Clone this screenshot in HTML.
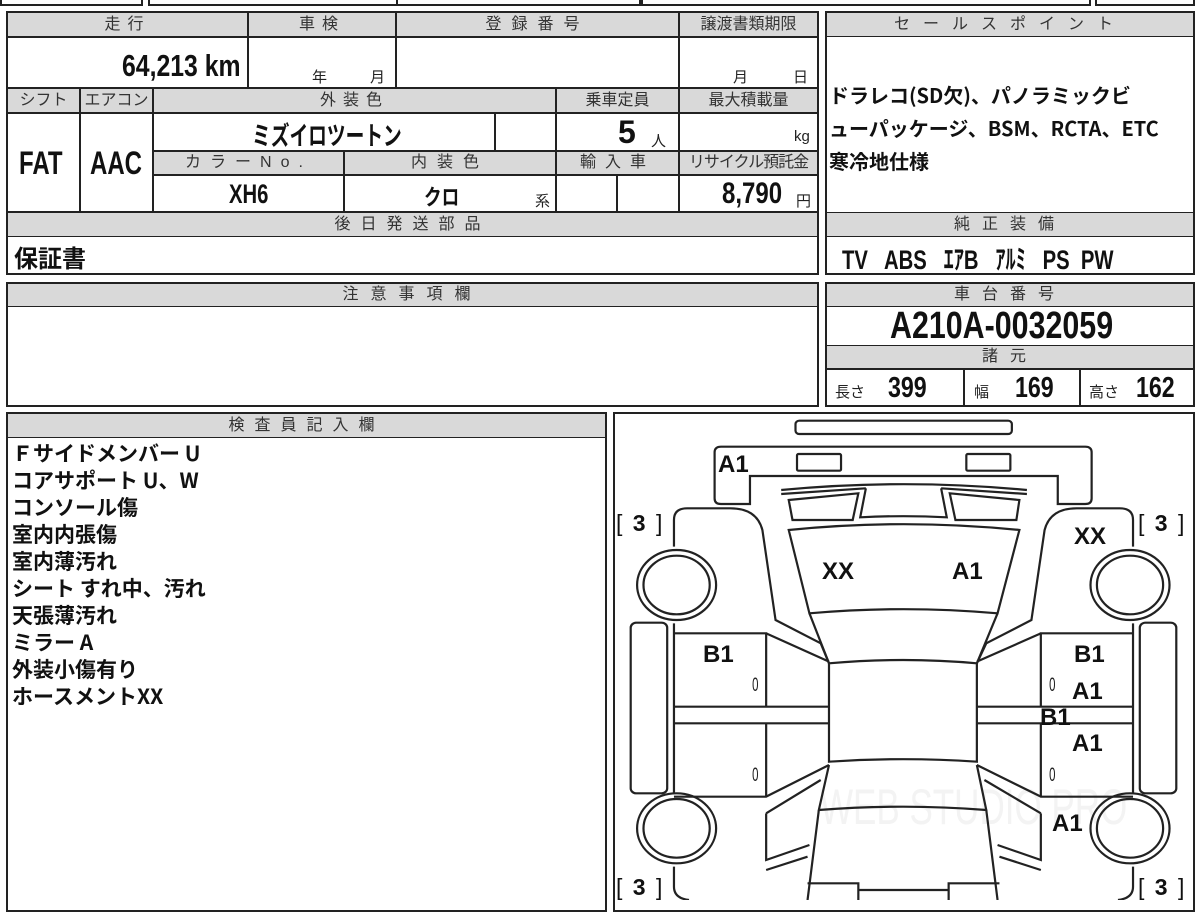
<!DOCTYPE html>
<html><head><meta charset="utf-8"><style>
*{box-sizing:border-box;margin:0;padding:0}
body{width:1200px;height:900px;background:#fff;position:relative;overflow:hidden;font-family:"Liberation Sans","Noto Sans CJK JP",sans-serif;color:#111}
.b{position:absolute;border:2px solid #222;background:#fff}
.h{position:absolute;background:#d9d9d9;border:1px solid #222;font-size:16px;color:#333;text-align:center;letter-spacing:7px;line-height:23px;white-space:nowrap;overflow:hidden}
.c{position:absolute;border:1px solid #222;background:#fff}
.t{position:absolute;font-weight:bold;white-space:nowrap;font-family:"Liberation Sans Narrow","Liberation Sans","Noto Sans CJK JP",sans-serif}
.s{position:absolute;font-size:15px;color:#222;white-space:nowrap}
.m{position:absolute;font-weight:bold;font-size:24px;white-space:nowrap;font-family:"Liberation Sans Narrow","Liberation Sans",sans-serif}
</style></head><body>
<div class="b" style="left:0;top:-10px;width:143px;height:16px"></div>
<div class="b" style="left:148px;top:-10px;width:250px;height:16px"></div>
<div class="b" style="left:396px;top:-10px;width:245px;height:16px"></div>
<div class="b" style="left:641px;top:-10px;width:450px;height:16px"></div>
<div class="b" style="left:1095px;top:-10px;width:100px;height:16px"></div>

<div class="b" style="left:6px;top:11px;width:813px;height:264px"></div>
<div class="h" style="left:7px;top:12px;width:241px;height:25px">走行</div>
<div class="h" style="left:248px;top:12px;width:148px;height:25px">車検</div>
<div class="h" style="left:396px;top:12px;width:283px;height:25px;letter-spacing:10px">登録番号</div>
<div class="h" style="left:679px;top:12px;width:139px;height:25px;letter-spacing:0">譲渡書類期限</div>
<div class="c" style="left:7px;top:37px;width:241px;height:51px"></div>
<div class="c" style="left:248px;top:37px;width:148px;height:51px"></div>
<div class="c" style="left:396px;top:37px;width:283px;height:51px"></div>
<div class="c" style="left:679px;top:37px;width:139px;height:51px"></div>
<div class="t" style="left:122px;top:48px;font-size:31px;transform:scaleX(.8);transform-origin:left">64,213 km</div>
<div class="s" style="left:312px;top:66px">年</div><div class="s" style="left:370px;top:66px">月</div>
<div class="s" style="left:733px;top:66px">月</div><div class="s" style="left:793px;top:66px">日</div>

<div class="h" style="left:7px;top:88px;width:73px;height:25px;letter-spacing:0">シフト</div>
<div class="h" style="left:80px;top:88px;width:73px;height:25px;letter-spacing:0">エアコン</div>
<div class="h" style="left:153px;top:88px;width:403px;height:25px">外装色</div>
<div class="h" style="left:556px;top:88px;width:123px;height:25px;letter-spacing:0">乗車定員</div>
<div class="h" style="left:679px;top:88px;width:139px;height:25px;letter-spacing:0">最大積載量</div>
<div class="c" style="left:7px;top:113px;width:73px;height:99px"></div>
<div class="c" style="left:80px;top:113px;width:73px;height:99px"></div>
<div class="t" style="left:19px;top:145px;font-size:32px;transform:scaleX(.75);transform-origin:left">FAT</div>
<div class="t" style="left:90px;top:145px;font-size:32px;transform:scaleX(.75);transform-origin:left">AAC</div>
<div class="c" style="left:153px;top:113px;width:342px;height:38px"></div>
<div class="c" style="left:495px;top:113px;width:61px;height:38px"></div>
<div class="c" style="left:556px;top:113px;width:123px;height:38px"></div>
<div class="c" style="left:679px;top:113px;width:139px;height:38px"></div>
<div class="t" style="left:252px;top:116px;font-size:26px;font-family:'Noto Sans CJK JP',sans-serif;transform:scaleX(.72);transform-origin:left">ミズイロツートン</div>
<div class="t" style="left:618px;top:114px;font-size:32px">5</div><div class="s" style="left:651px;top:130px">人</div>
<div class="s" style="left:794px;top:128px">kg</div>
<div class="h" style="left:153px;top:151px;width:191px;height:24px;line-height:22px;letter-spacing:9px">カラーNo.</div>
<div class="h" style="left:344px;top:151px;width:212px;height:24px;line-height:22px;letter-spacing:10px">内装色</div>
<div class="h" style="left:556px;top:151px;width:123px;height:24px;line-height:22px;letter-spacing:9px">輸入車</div>
<div class="h" style="left:679px;top:151px;width:139px;height:24px;line-height:22px;letter-spacing:-1px">リサイクル預託金</div>
<div class="c" style="left:153px;top:175px;width:191px;height:37px"></div>
<div class="c" style="left:344px;top:175px;width:212px;height:37px"></div>
<div class="c" style="left:556px;top:175px;width:61px;height:37px"></div>
<div class="c" style="left:617px;top:175px;width:62px;height:37px"></div>
<div class="c" style="left:679px;top:175px;width:139px;height:37px"></div>
<div class="t" style="left:229px;top:179px;font-size:27px;transform:scaleX(.75);transform-origin:left">XH6</div>
<div class="t" style="left:424px;top:180px;font-size:22px;font-family:'Noto Sans CJK JP',sans-serif;transform:scaleX(.8);transform-origin:left">クロ</div>
<div class="s" style="left:535px;top:190px">系</div>
<div class="t" style="left:722px;top:177px;font-size:30px;transform:scaleX(.8);transform-origin:left">8,790</div><div class="s" style="left:796px;top:190px">円</div>
<div class="h" style="left:7px;top:212px;width:811px;height:25px;letter-spacing:10px">後日発送部品</div>
<div class="t" style="left:14px;top:239px;font-size:24px;font-family:'Noto Sans CJK JP',sans-serif">保証書</div>

<div class="b" style="left:825px;top:11px;width:370px;height:264px"></div>
<div class="h" style="left:826px;top:12px;width:368px;height:25px;letter-spacing:13px">セールスポイント</div>
<div class="t" style="left:829px;top:78px;font-size:20px;line-height:33px;font-family:'Noto Sans CJK JP',sans-serif">ドラレコ(SD欠)、パノラミックビ<br>ューパッケージ、BSM、RCTA、ETC<br>寒冷地仕様</div>
<div class="h" style="left:826px;top:212px;width:368px;height:25px;letter-spacing:12px">純正装備</div>
<div class="t" style="left:842px;top:238px;font-size:27px;transform:scaleX(.75);transform-origin:left">TV&nbsp;&nbsp; ABS&nbsp;&nbsp; ｴｱB&nbsp;&nbsp; ｱﾙﾐ&nbsp;&nbsp; PS&nbsp; PW</div>

<div class="b" style="left:6px;top:282px;width:813px;height:125px"></div>
<div class="h" style="left:7px;top:283px;width:811px;height:24px;line-height:22px;letter-spacing:12px">注意事項欄</div>

<div class="b" style="left:825px;top:282px;width:370px;height:125px"></div>
<div class="h" style="left:826px;top:283px;width:368px;height:24px;line-height:22px;letter-spacing:12px">車台番号</div>
<div class="t" style="left:890px;top:305px;font-size:38px;transform:scaleX(.8);transform-origin:left">A210A-0032059</div>
<div class="h" style="left:826px;top:345px;width:368px;height:24px;line-height:22px;letter-spacing:12px">諸元</div>
<div class="c" style="left:826px;top:369px;width:138px;height:37px"></div>
<div class="c" style="left:964px;top:369px;width:116px;height:37px"></div>
<div class="c" style="left:1080px;top:369px;width:114px;height:37px"></div>
<div class="s" style="left:835px;top:381px">長さ</div><div class="t" style="left:888px;top:372px;font-size:29px;transform:scaleX(.8);transform-origin:left">399</div>
<div class="s" style="left:974px;top:381px">幅</div><div class="t" style="left:1015px;top:372px;font-size:29px;transform:scaleX(.8);transform-origin:left">169</div>
<div class="s" style="left:1089px;top:381px">高さ</div><div class="t" style="left:1136px;top:372px;font-size:29px;transform:scaleX(.8);transform-origin:left">162</div>

<div class="b" style="left:6px;top:412px;width:601px;height:500px"></div>
<div class="h" style="left:7px;top:413px;width:599px;height:25px;letter-spacing:10px">検査員記入欄</div>
<div class="t" style="left:12px;top:440px;font-size:21px;line-height:27px;font-family:'Noto Sans CJK JP',sans-serif">Ｆサイドメンバー U<br>コアサポート U、W<br>コンソール傷<br>室内内張傷<br>室内薄汚れ<br>シート すれ中、汚れ<br>天張薄汚れ<br>ミラー A<br>外装小傷有り<br>ホースメントXX</div>

<div class="b" style="left:613px;top:412px;width:582px;height:500px"></div>
<div style="position:absolute;left:820px;top:778px;font-size:50px;color:#f3f3f3;transform:scaleX(.7);transform-origin:left;white-space:nowrap">WEB STUDIO PRO</div>
<svg style="position:absolute;left:610px;top:410px" width="590" height="490" viewBox="0 0 1568 1470" preserveAspectRatio="none" fill="none" stroke="#222" stroke-width="2.2">
<rect x="493" y="32" width="575" height="40" rx="10" vector-effect="non-scaling-stroke"/>
<path vector-effect="non-scaling-stroke" d="M295,110 H1263 Q1280,110 1280,127 V265 Q1280,282 1263,282 H1190 V198 H372 V282 H295 Q278,282 278,265 V127 Q278,110 295,110 Z"/>
<rect vector-effect="non-scaling-stroke" x="497" y="132" width="117" height="50" rx="4"/>
<rect vector-effect="non-scaling-stroke" x="947" y="132" width="117" height="50" rx="4"/>
<path vector-effect="non-scaling-stroke" d="M455,240 Q780,205 1108,240 M455,252 L680,235 M880,235 L1108,252"/>
<path vector-effect="non-scaling-stroke" d="M475,270 L660,250 L645,330 L485,330 Z M903,250 L1088,270 L1080,330 L918,330 Z M680,235 L665,322 Q780,315 895,322 L880,235"/>
<path vector-effect="non-scaling-stroke" d="M475,360 Q780,325 1088,360 L1030,610 Q780,585 530,610 Z"/>
<path vector-effect="non-scaling-stroke" d="M530,610 L582,760 Q780,740 975,760 L1030,610 M582,760 V1055 Q780,1040 975,1055 V760"/>
<path vector-effect="non-scaling-stroke" d="M170,410 V330 Q170,295 205,295 H320 Q390,295 405,360 L440,630 L560,700 L582,760 M1390,410 V330 Q1390,295 1355,295 H1240 Q1170,295 1155,360 L1120,630 L1000,700 L975,760"/>
<path vector-effect="non-scaling-stroke" d="M170,670 H415 V890 M415,670 L582,755 M170,890 H582 M170,940 H582 M415,940 V1160 M170,1160 H415 L582,1065 M170,640 V1150"/>
<path vector-effect="non-scaling-stroke" d="M1390,670 H1145 V890 M1145,670 L975,755 M1390,890 H975 M1390,940 H975 M1145,940 V1160 M1390,1160 H1145 L975,1065 M1390,640 V1150"/>
<rect vector-effect="non-scaling-stroke" x="55" y="638" width="97" height="512" rx="15"/>
<rect vector-effect="non-scaling-stroke" x="1408" y="638" width="97" height="512" rx="15"/>
<circle vector-effect="non-scaling-stroke" cx="177" cy="525" r="105"/><circle vector-effect="non-scaling-stroke" cx="177" cy="525" r="88"/>
<circle vector-effect="non-scaling-stroke" cx="177" cy="1255" r="105"/><circle vector-effect="non-scaling-stroke" cx="177" cy="1255" r="88"/>
<circle vector-effect="non-scaling-stroke" cx="1382" cy="525" r="105"/><circle vector-effect="non-scaling-stroke" cx="1382" cy="525" r="88"/>
<circle vector-effect="non-scaling-stroke" cx="1382" cy="1255" r="105"/><circle vector-effect="non-scaling-stroke" cx="1382" cy="1255" r="88"/>
<path vector-effect="non-scaling-stroke" d="M582,1065 L555,1200 Q780,1180 1000,1200 L975,1065 M555,1200 L525,1470 M1000,1200 L1030,1470"/>
<path vector-effect="non-scaling-stroke" d="M415,1210 L560,1110 M415,1210 V1350 L530,1305 M415,1380 L525,1340 M1145,1210 L995,1110 M1145,1210 V1350 L1030,1305 M1145,1380 L1035,1340"/>
<path vector-effect="non-scaling-stroke" d="M170,1370 V1430 Q170,1465 210,1470 M1390,1370 V1430 Q1390,1465 1350,1470"/>
<path vector-effect="non-scaling-stroke" d="M525,1420 H660 V1470 M900,1470 V1420 H1035 M660,1440 H900"/>
</svg>
<div class="m" style="left:718px;top:451px">A1</div>
<div class="m" style="left:1074px;top:523px">XX</div>
<div class="m" style="left:822px;top:558px">XX</div>
<div class="m" style="left:952px;top:558px">A1</div>
<div class="m" style="left:703px;top:641px">B1</div>
<div class="m" style="left:1074px;top:641px">B1</div>
<div class="m" style="left:1072px;top:678px">A1</div>
<div class="m" style="left:1040px;top:704px">B1</div>
<div class="m" style="left:1072px;top:730px">A1</div>
<div class="m" style="left:1052px;top:810px">A1</div>
<div class="s" style="left:750px;top:675px;font-size:19px;transform:scaleX(.6)">0</div>
<div class="s" style="left:750px;top:765px;font-size:19px;transform:scaleX(.6)">0</div>
<div class="s" style="left:1047px;top:675px;font-size:19px;transform:scaleX(.6)">0</div>
<div class="s" style="left:1047px;top:765px;font-size:19px;transform:scaleX(.6)">0</div>
<div class="m" style="left:616px;top:510px;font-size:23px;font-weight:normal;word-spacing:4px">[ <b>3</b> ]</div>
<div class="m" style="left:1138px;top:510px;font-size:23px;font-weight:normal;word-spacing:4px">[ <b>3</b> ]</div>
<div class="m" style="left:616px;top:874px;font-size:23px;font-weight:normal;word-spacing:4px">[ <b>3</b> ]</div>
<div class="m" style="left:1138px;top:874px;font-size:23px;font-weight:normal;word-spacing:4px">[ <b>3</b> ]</div>
</body></html>
